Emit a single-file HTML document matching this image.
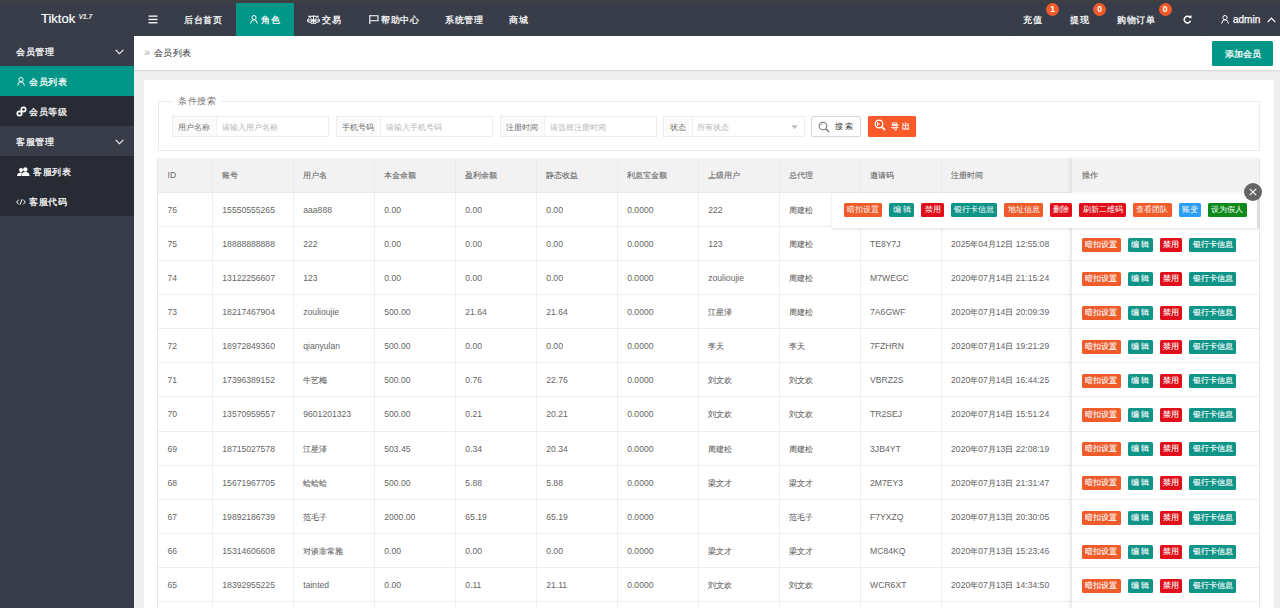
<!DOCTYPE html>
<html><head><meta charset="utf-8"><style>*{margin:0;padding:0;box-sizing:border-box}
html,body{width:1280px;height:608px;overflow:hidden;background:#efefef;font-family:"Liberation Sans",sans-serif;position:relative}
#topstrip{position:absolute;left:0;top:0;width:1280px;height:3px;background:#3e3f42}
#top{position:absolute;left:0;top:3px;width:1280px;height:33px;background:#393d49;color:#fff}
#logo{position:absolute;left:41px;top:8.4px;font-size:13px;color:#fff;line-height:16px}
#logo sup{font-size:6.5px;font-style:italic;position:relative;top:-2.5px;margin-left:3.5px;vertical-align:top}
.nav{position:absolute;top:0;height:33px;line-height:33px;font-size:10px;color:#fff;white-space:nowrap}
.nav.act{background:#009688}
#side{position:absolute;left:0;top:36px;width:134px;height:572px;background:#393d49}
.si{position:absolute;left:0;width:134px;height:30px;line-height:31.5px;font-size:9.9px;color:#fff;white-space:nowrap}
.si.sub{background:#282b33}
.si.act{background:#009688}
#crumb{position:absolute;left:134px;top:36px;width:1146px;height:33.5px;background:#fff;box-shadow:0 1px 1.5px rgba(0,0,0,.12)}
#card{position:absolute;left:144px;top:80px;width:1130px;height:540px;background:#fff}
#fs{position:absolute;left:158px;top:101px;width:1102px;height:50px;border:1px solid #ececec}
#legend{position:absolute;left:172px;top:95px;padding:0 6px;background:#fff;font-size:10px;line-height:12px;color:#777}
.ig{position:absolute;top:116px;height:21px;border:1px solid #ededed;background:#fff;font-size:8.7px;line-height:20.4px;white-space:nowrap}
.ig .lb{position:absolute;left:0;top:0;height:19px;background:#fbfbfb;border-right:1px solid #efefef;color:#707070;text-align:center}
.ig .ph{position:absolute;top:0;color:#b5b5b5}
#tbl{position:absolute;left:157px;top:158px;width:1102px;height:460px;border-left:1px solid #e6e6e6;font-size:8.6px;color:#666}
#tbl .th{position:absolute;top:0;height:34px;line-height:34.6px;padding-left:10.6px;white-space:nowrap}
#tbl::before{content:"";position:absolute;left:0;top:0;width:100%;height:34px;background:#f2f2f2}
#tbl .td{position:absolute;height:34px;line-height:36.4px;padding-left:10.6px;white-space:nowrap}
#tbl .vl{position:absolute;top:34px;width:1px;height:430px;background:#efefef}
#tbl .hl{position:absolute;left:0;width:100%;height:1px;background:#eee}
#fixed{position:absolute;left:912.6px;top:0;width:189px;height:460px;background:#fff;box-shadow:-2px 0 3px rgba(0,0,0,.06);border-left:1px solid #e8e8e8;border-right:1px solid #e6e6e6}
#fixed::before{content:"";position:absolute;left:0;top:0;width:100%;height:34px;background:#f2f2f2}
#fixed .hl2{position:absolute;left:0;width:100%;height:1px;background:#eee}
.ops{position:absolute;left:10.4px;height:34px;padding-top:11.8px;white-space:nowrap;font-size:0}
.b{display:inline-block;height:14px;line-height:14px;padding:0;text-align:center;font-size:8px;color:#fff;border-radius:1.5px;margin-right:7px;vertical-align:top}
.b .c{font-size:100%}
.w2{width:22.5px}.w4{width:38.6px}.w5{width:46.5px}.we{width:25.3px}
.b.o{background:#ef5b29}.b.t{background:#0f9488}.b.r{background:#e10f19}.b.bl{background:#2d9ef5}.b.g{background:#0d8a1a}
#pop{position:absolute;left:832px;top:193px;width:427px;height:34.5px;background:#fff;border-right:2px solid #dcdcdc;box-shadow:0 1px 3px rgba(0,0,0,.12);padding:10px 0 0 11.5px;white-space:nowrap;font-size:0;z-index:5}
#close{position:absolute;left:1243.5px;top:183px;width:18px;height:18px;border-radius:50%;background:#646464;z-index:6}
.ico{position:absolute;display:block}
.c{font-style:normal;font-size:93%}
.badge{position:absolute;top:0px;width:13px;height:13px;border-radius:50%;background:#f05a28;color:#fff;font-size:8.5px;font-weight:bold;line-height:13px;text-align:center}
#crumbtxt{position:absolute;left:144px;top:46.3px;font-size:10px;line-height:12px;color:#333;white-space:nowrap}
#addbtn{position:absolute;left:1212px;top:41px;width:61px;height:25px;background:#009688;color:#fff;font-size:10px;line-height:25px;text-align:center;border-radius:1.5px}
#sbtn{position:absolute;left:811px;top:116px;width:50px;height:21px;border:1px solid #d6d6d6;background:#fff;border-radius:1.5px;font-size:8.7px;line-height:19px;color:#333}
#ebtn{position:absolute;left:868px;top:115.5px;width:48px;height:21.5px;background:#f8592a;border-radius:1.5px;font-size:8.7px;line-height:21px;color:#fff}

.nav,.si,#addbtn,#ebtn span{-webkit-text-stroke:0.25px currentColor}
.nav .c,.si .c,#crumbtxt .c,#legend .c{letter-spacing:0.55px}

#tbl .vlh{position:absolute;top:0;width:1px;height:34px;background:#eaeaea}
#tbl .c{-webkit-text-stroke:0.1px currentColor}
#logo{-webkit-text-stroke:0.2px currentColor}
</style></head><body>
<div id="topstrip"></div>
<div id="top">
 <div id="logo">Tiktok<sup>V1.7</sup></div>
 <svg class="ico" style="left:148px;top:12px" width="10" height="9" viewBox="0 0 10 9"><rect x="0.5" y="0.5" width="9" height="1.3" fill="#fff"/><rect x="0.5" y="3.8" width="9" height="1.3" fill="#fff"/><rect x="0.5" y="7.1" width="9" height="1.3" fill="#fff"/></svg>
 <div class="nav" style="left:184px"><i class="c">后台首页</i></div>
 <div class="nav act" style="left:236px;width:58px;padding-left:25px"><i class="c">角色</i></div>
 <svg class="ico" style="left:250px;top:12px" width="8" height="9" viewBox="0 0 8 9"><circle cx="4" cy="2.6" r="2.1" fill="none" stroke="#fff" stroke-width="1"/><path d="M0.6 8.6 Q1 4.8 4 4.8 Q7 4.8 7.4 8.6" fill="none" stroke="#fff" stroke-width="1"/></svg>
 <svg class="ico" style="left:306.5px;top:11.7px" width="13" height="9.5" viewBox="0 0 13 9.5"><path d="M1.2 1.2 H11.8 M6.5 0.2 V8 M3.8 8.8 H9.2" stroke="#fff" stroke-width="1.1" fill="none"/><path d="M0.4 5 H5.4 A2.5 2.3 0 0 1 0.4 5Z M7.6 5 H12.6 A2.5 2.3 0 0 1 7.6 5Z" stroke="#fff" stroke-width="1.1" fill="none"/><path d="M2.9 1.2 L0.9 5 M2.9 1.2 L4.9 5 M10.1 1.2 L8.1 5 M10.1 1.2 L12.1 5" stroke="#fff" stroke-width="0.7"/></svg>
 <div class="nav" style="left:322px"><i class="c">交易</i></div>
 <svg class="ico" style="left:368.5px;top:11.7px" width="10" height="9.5" viewBox="0 0 10 9.5"><path d="M0.8 0 V9.5 M0.8 0.8 H9 V5.8 H0.8" stroke="#fff" stroke-width="1.1" fill="none"/></svg>
 <div class="nav" style="left:381px"><i class="c">帮助中心</i></div>
 <div class="nav" style="left:445px"><i class="c">系统管理</i></div>
 <div class="nav" style="left:509px"><i class="c">商城</i></div>
 <div style="position:absolute;left:1010px;top:0;width:1px;height:33px;background:#363945"></div><div style="position:absolute;left:1205px;top:0;width:1px;height:33px;background:#363945"></div>
 <div class="nav" style="left:1023px"><i class="c">充值</i></div>
 <div class="nav" style="left:1070px"><i class="c">提现</i></div>
 <div class="nav" style="left:1117px"><i class="c">购物订单</i></div>
 <div class="badge" style="left:1046px">1</div>
 <div class="badge" style="left:1093px">0</div>
 <div class="badge" style="left:1158.5px">0</div>
 <svg class="ico" style="left:1183px;top:12.3px" width="9" height="9" viewBox="0 0 9 9"><path d="M7.4 3 A3.3 3.3 0 1 0 7.6 5.8" stroke="#fff" stroke-width="1.5" fill="none"/><path d="M5.2 0.9 L8.6 0.4 L8.4 3.8 Z" fill="#fff"/></svg>
 <svg class="ico" style="left:1221px;top:12px" width="8" height="9" viewBox="0 0 8 9"><circle cx="4" cy="2.6" r="2.1" fill="none" stroke="#fff" stroke-width="1"/><path d="M0.6 8.6 Q1 4.8 4 4.8 Q7 4.8 7.4 8.6" fill="none" stroke="#fff" stroke-width="1"/></svg>
 <div class="nav" style="left:1233px">admin</div>
 <svg class="ico" style="left:1267px;top:14px" width="9" height="6" viewBox="0 0 9 6"><path d="M0.7 5.2 L4.5 1.2 L8.3 5.2" stroke="#fff" stroke-width="1.2" fill="none"/></svg>
</div>
<div id="side">
 <div class="si" style="top:0;padding-left:16px"><i class="c">会员管理</i></div>
 <svg class="ico" style="left:115px;top:13px" width="9" height="6" viewBox="0 0 9 6"><path d="M0.7 0.8 L4.5 4.8 L8.3 0.8" stroke="#fff" stroke-width="1.1" fill="none"/></svg>
 <div class="si act" style="top:30px;padding-left:29px"><i class="c">会员列表</i></div>
 <svg class="ico" style="left:17px;top:41px" width="8" height="9" viewBox="0 0 8 9"><circle cx="4" cy="2.6" r="2.1" fill="none" stroke="#fff" stroke-width="1"/><path d="M0.6 8.6 Q1 4.8 4 4.8 Q7 4.8 7.4 8.6" fill="none" stroke="#fff" stroke-width="1"/></svg>
 <div class="si sub" style="top:60px;padding-left:29px"><i class="c">会员等级</i></div>
 <svg class="ico" style="left:15.5px;top:70px" width="11" height="11" viewBox="0 0 11 11"><circle cx="3.5" cy="7.5" r="2.2" stroke="#fff" stroke-width="1.7" fill="none"/><circle cx="7.5" cy="3.5" r="2.2" stroke="#fff" stroke-width="1.7" fill="none"/><path d="M4.6 6.4 L6.4 4.6" stroke="#fff" stroke-width="2"/></svg>
 <div class="si" style="top:90px;padding-left:16px"><i class="c">客服管理</i></div>
 <svg class="ico" style="left:115px;top:103px" width="9" height="6" viewBox="0 0 9 6"><path d="M0.7 0.8 L4.5 4.8 L8.3 0.8" stroke="#fff" stroke-width="1.1" fill="none"/></svg>
 <div class="si sub" style="top:120px;padding-left:33px"><i class="c">客服列表</i></div>
 <svg class="ico" style="left:17px;top:131px" width="13" height="9" viewBox="0 0 13 9"><circle cx="8.3" cy="2.5" r="2.2" fill="#fff"/><path d="M4.5 9 Q4.5 5 8.3 5 Q12.5 5 12.5 9Z" fill="#fff"/><circle cx="4" cy="3" r="2" fill="#fff"/><path d="M0 9 Q0 5.5 4 5.5 Q5 5.5 5.5 6 Q4 7 4 9Z" fill="#fff"/></svg>
 <div class="si sub" style="top:150px;padding-left:29px"><i class="c">客服代码</i></div>
 <svg class="ico" style="left:16px;top:163px" width="10" height="6" viewBox="0 0 10 6"><path d="M2.8 0.6 L0.7 3 L2.8 5.4 M7.2 0.6 L9.3 3 L7.2 5.4 M5.9 0.3 L4.1 5.7" stroke="#fff" stroke-width="1" fill="none"/></svg>
</div>
<div id="crumb"></div>
<div id="crumbtxt"><span style="color:#aaa;font-size:11px">»</span><span style="margin-left:3.5px"><i class="c">会员列表</i></span></div>
<div id="addbtn"><i class="c">添加会员</i></div>
<div id="card"></div>
<div id="fs"></div>
<div id="legend"><i class="c">条件搜索</i></div>
<div class="ig" style="left:171.5px;width:157px"><div class="lb" style="width:44px"><i class="c">用户名称</i></div><div class="ph" style="left:49px"><i class="c">请输入用户名称</i></div></div>
<div class="ig" style="left:335.5px;width:157px"><div class="lb" style="width:44px"><i class="c">手机号码</i></div><div class="ph" style="left:49px"><i class="c">请输入手机号码</i></div></div>
<div class="ig" style="left:499.5px;width:157px"><div class="lb" style="width:44px"><i class="c">注册时间</i></div><div class="ph" style="left:49px"><i class="c">请选择注册时间</i></div></div>
<div class="ig" style="left:663px;width:141.5px"><div class="lb" style="width:29px"><i class="c">状态</i></div><div class="ph" style="left:33px"><i class="c">所有状态</i></div></div>
<svg class="ico" style="left:790.5px;top:124.5px" width="7" height="4.5" viewBox="0 0 7 4.5"><path d="M0.3 0.3 H6.7 L3.5 4.2Z" fill="#bbb"/></svg>
<div id="sbtn"><svg style="position:absolute;left:6px;top:4px" width="12" height="12" viewBox="0 0 12 12"><circle cx="5" cy="5" r="3.8" stroke="#777" stroke-width="1.1" fill="none"/><path d="M7.8 7.8 L11 11" stroke="#777" stroke-width="1.6"/><path d="M3 4.2 A2 2 0 0 1 4.4 2.6" stroke="#777" stroke-width="0.8" fill="none"/></svg><span style="position:absolute;left:23px"><i class="c">搜</i>&nbsp;<i class="c">索</i></span></div>
<div id="ebtn"><svg style="position:absolute;left:6px;top:3.5px" width="12" height="12" viewBox="0 0 12 12"><circle cx="5" cy="5" r="3.8" stroke="#fff" stroke-width="1.3" fill="none"/><path d="M7.8 7.8 L11 11" stroke="#fff" stroke-width="1.8"/><path d="M3.5 3 V7 M3.5 5 H6" stroke="#fff" stroke-width="0.9" fill="none"/></svg><span style="position:absolute;left:23px;letter-spacing:2.5px"><i class="c">导出</i></span></div>
<div id="pop"><span class="b o w4"><i class="c">暗扣设置</i></span><span class="b t we"><i class="c">编</i>&nbsp;<i class="c">辑</i></span><span class="b r w2"><i class="c">禁用</i></span><span class="b t w5"><i class="c">银行卡信息</i></span><span class="b o w4"><i class="c">地址信息</i></span><span class="b r w2"><i class="c">删除</i></span><span class="b r w5"><i class="c">刷新二维码</i></span><span class="b o w4"><i class="c">查看团队</i></span><span class="b bl w2"><i class="c">账变</i></span><span class="b g w4"><i class="c">设为假人</i></span></div>
<div id="close"><svg width="18" height="18" viewBox="0 0 18 18"><path d="M5.8 5.8 L12.2 12.2 M12.2 5.8 L5.8 12.2" stroke="#fff" stroke-width="1.1"/></svg></div>

<div id="tbl"><div class="th" style="left:-1.00px">ID</div><div class="th" style="left:53.75px"><i class="c">账号</i></div><div class="th" style="left:134.70px"><i class="c">用户名</i></div><div class="th" style="left:215.70px"><i class="c">本金余额</i></div><div class="th" style="left:296.70px"><i class="c">盈利余额</i></div><div class="th" style="left:377.60px"><i class="c">静态收益</i></div><div class="th" style="left:458.60px"><i class="c">利息宝金额</i></div><div class="th" style="left:539.60px"><i class="c">上级用户</i></div><div class="th" style="left:620.50px"><i class="c">总代理</i></div><div class="th" style="left:701.50px"><i class="c">邀请码</i></div><div class="th" style="left:782.50px"><i class="c">注册时间</i></div><div class="hl" style="top:34px;background:#eaeaea"></div><div class="vl" style="left:53.75px"></div><div class="vlh" style="left:53.75px"></div><div class="vl" style="left:134.70px"></div><div class="vlh" style="left:134.70px"></div><div class="vl" style="left:215.70px"></div><div class="vlh" style="left:215.70px"></div><div class="vl" style="left:296.70px"></div><div class="vlh" style="left:296.70px"></div><div class="vl" style="left:377.60px"></div><div class="vlh" style="left:377.60px"></div><div class="vl" style="left:458.60px"></div><div class="vlh" style="left:458.60px"></div><div class="vl" style="left:539.60px"></div><div class="vlh" style="left:539.60px"></div><div class="vl" style="left:620.50px"></div><div class="vlh" style="left:620.50px"></div><div class="vl" style="left:701.50px"></div><div class="vlh" style="left:701.50px"></div><div class="vl" style="left:782.50px"></div><div class="vlh" style="left:782.50px"></div><div class="hl" style="top:68.08px"></div><div class="td" style="left:-1.00px;top:34.00px">76</div><div class="td" style="left:53.75px;top:34.00px">15550555265</div><div class="td" style="left:134.70px;top:34.00px">aaa888</div><div class="td" style="left:215.70px;top:34.00px">0.00</div><div class="td" style="left:296.70px;top:34.00px">0.00</div><div class="td" style="left:377.60px;top:34.00px">0.00</div><div class="td" style="left:458.60px;top:34.00px">0.0000</div><div class="td" style="left:539.60px;top:34.00px">222</div><div class="td" style="left:620.50px;top:34.00px"><i class="c">周建松</i></div><div class="hl" style="top:102.16px"></div><div class="td" style="left:-1.00px;top:68.08px">75</div><div class="td" style="left:53.75px;top:68.08px">18888888888</div><div class="td" style="left:134.70px;top:68.08px">222</div><div class="td" style="left:215.70px;top:68.08px">0.00</div><div class="td" style="left:296.70px;top:68.08px">0.00</div><div class="td" style="left:377.60px;top:68.08px">0.00</div><div class="td" style="left:458.60px;top:68.08px">0.0000</div><div class="td" style="left:539.60px;top:68.08px">123</div><div class="td" style="left:620.50px;top:68.08px"><i class="c">周建松</i></div><div class="td" style="left:701.50px;top:68.08px">TE8Y7J</div><div class="td" style="left:782.50px;top:68.08px">2025<i class="c">年</i>04<i class="c">月</i>12<i class="c">日</i> 12:55:08</div><div class="hl" style="top:136.24px"></div><div class="td" style="left:-1.00px;top:102.16px">74</div><div class="td" style="left:53.75px;top:102.16px">13122256607</div><div class="td" style="left:134.70px;top:102.16px">123</div><div class="td" style="left:215.70px;top:102.16px">0.00</div><div class="td" style="left:296.70px;top:102.16px">0.00</div><div class="td" style="left:377.60px;top:102.16px">0.00</div><div class="td" style="left:458.60px;top:102.16px">0.0000</div><div class="td" style="left:539.60px;top:102.16px">zoulioujie</div><div class="td" style="left:620.50px;top:102.16px"><i class="c">周建松</i></div><div class="td" style="left:701.50px;top:102.16px">M7WEGC</div><div class="td" style="left:782.50px;top:102.16px">2020<i class="c">年</i>07<i class="c">月</i>14<i class="c">日</i> 21:15:24</div><div class="hl" style="top:170.32px"></div><div class="td" style="left:-1.00px;top:136.24px">73</div><div class="td" style="left:53.75px;top:136.24px">18217467904</div><div class="td" style="left:134.70px;top:136.24px">zoulioujie</div><div class="td" style="left:215.70px;top:136.24px">500.00</div><div class="td" style="left:296.70px;top:136.24px">21.64</div><div class="td" style="left:377.60px;top:136.24px">21.64</div><div class="td" style="left:458.60px;top:136.24px">0.0000</div><div class="td" style="left:539.60px;top:136.24px"><i class="c">江星泽</i></div><div class="td" style="left:620.50px;top:136.24px"><i class="c">周建松</i></div><div class="td" style="left:701.50px;top:136.24px">7A6GWF</div><div class="td" style="left:782.50px;top:136.24px">2020<i class="c">年</i>07<i class="c">月</i>14<i class="c">日</i> 20:09:39</div><div class="hl" style="top:204.40px"></div><div class="td" style="left:-1.00px;top:170.32px">72</div><div class="td" style="left:53.75px;top:170.32px">18972849360</div><div class="td" style="left:134.70px;top:170.32px">qianyulan</div><div class="td" style="left:215.70px;top:170.32px">500.00</div><div class="td" style="left:296.70px;top:170.32px">0.00</div><div class="td" style="left:377.60px;top:170.32px">0.00</div><div class="td" style="left:458.60px;top:170.32px">0.0000</div><div class="td" style="left:539.60px;top:170.32px"><i class="c">李天</i></div><div class="td" style="left:620.50px;top:170.32px"><i class="c">李天</i></div><div class="td" style="left:701.50px;top:170.32px">7FZHRN</div><div class="td" style="left:782.50px;top:170.32px">2020<i class="c">年</i>07<i class="c">月</i>14<i class="c">日</i> 19:21:29</div><div class="hl" style="top:238.48px"></div><div class="td" style="left:-1.00px;top:204.40px">71</div><div class="td" style="left:53.75px;top:204.40px">17396389152</div><div class="td" style="left:134.70px;top:204.40px"><i class="c">牛艺梅</i></div><div class="td" style="left:215.70px;top:204.40px">500.00</div><div class="td" style="left:296.70px;top:204.40px">0.76</div><div class="td" style="left:377.60px;top:204.40px">22.76</div><div class="td" style="left:458.60px;top:204.40px">0.0000</div><div class="td" style="left:539.60px;top:204.40px"><i class="c">刘文欢</i></div><div class="td" style="left:620.50px;top:204.40px"><i class="c">刘文欢</i></div><div class="td" style="left:701.50px;top:204.40px">VBRZ2S</div><div class="td" style="left:782.50px;top:204.40px">2020<i class="c">年</i>07<i class="c">月</i>14<i class="c">日</i> 16:44:25</div><div class="hl" style="top:272.56px"></div><div class="td" style="left:-1.00px;top:238.48px">70</div><div class="td" style="left:53.75px;top:238.48px">13570959557</div><div class="td" style="left:134.70px;top:238.48px">9601201323</div><div class="td" style="left:215.70px;top:238.48px">500.00</div><div class="td" style="left:296.70px;top:238.48px">0.21</div><div class="td" style="left:377.60px;top:238.48px">20.21</div><div class="td" style="left:458.60px;top:238.48px">0.0000</div><div class="td" style="left:539.60px;top:238.48px"><i class="c">刘文欢</i></div><div class="td" style="left:620.50px;top:238.48px"><i class="c">刘文欢</i></div><div class="td" style="left:701.50px;top:238.48px">TR2SEJ</div><div class="td" style="left:782.50px;top:238.48px">2020<i class="c">年</i>07<i class="c">月</i>14<i class="c">日</i> 15:51:24</div><div class="hl" style="top:306.64px"></div><div class="td" style="left:-1.00px;top:272.56px">69</div><div class="td" style="left:53.75px;top:272.56px">18715027578</div><div class="td" style="left:134.70px;top:272.56px"><i class="c">江星泽</i></div><div class="td" style="left:215.70px;top:272.56px">503.45</div><div class="td" style="left:296.70px;top:272.56px">0.34</div><div class="td" style="left:377.60px;top:272.56px">20.34</div><div class="td" style="left:458.60px;top:272.56px">0.0000</div><div class="td" style="left:539.60px;top:272.56px"><i class="c">周建松</i></div><div class="td" style="left:620.50px;top:272.56px"><i class="c">周建松</i></div><div class="td" style="left:701.50px;top:272.56px">3JB4YT</div><div class="td" style="left:782.50px;top:272.56px">2020<i class="c">年</i>07<i class="c">月</i>13<i class="c">日</i> 22:08:19</div><div class="hl" style="top:340.72px"></div><div class="td" style="left:-1.00px;top:306.64px">68</div><div class="td" style="left:53.75px;top:306.64px">15671967705</div><div class="td" style="left:134.70px;top:306.64px"><i class="c">蛤蛤蛤</i></div><div class="td" style="left:215.70px;top:306.64px">500.00</div><div class="td" style="left:296.70px;top:306.64px">5.88</div><div class="td" style="left:377.60px;top:306.64px">5.88</div><div class="td" style="left:458.60px;top:306.64px">0.0000</div><div class="td" style="left:539.60px;top:306.64px"><i class="c">梁文才</i></div><div class="td" style="left:620.50px;top:306.64px"><i class="c">梁文才</i></div><div class="td" style="left:701.50px;top:306.64px">2M7EY3</div><div class="td" style="left:782.50px;top:306.64px">2020<i class="c">年</i>07<i class="c">月</i>13<i class="c">日</i> 21:31:47</div><div class="hl" style="top:374.80px"></div><div class="td" style="left:-1.00px;top:340.72px">67</div><div class="td" style="left:53.75px;top:340.72px">19892186739</div><div class="td" style="left:134.70px;top:340.72px"><i class="c">范毛子</i></div><div class="td" style="left:215.70px;top:340.72px">2000.00</div><div class="td" style="left:296.70px;top:340.72px">65.19</div><div class="td" style="left:377.60px;top:340.72px">65.19</div><div class="td" style="left:458.60px;top:340.72px">0.0000</div><div class="td" style="left:620.50px;top:340.72px"><i class="c">范毛子</i></div><div class="td" style="left:701.50px;top:340.72px">F7YXZQ</div><div class="td" style="left:782.50px;top:340.72px">2020<i class="c">年</i>07<i class="c">月</i>13<i class="c">日</i> 20:30:05</div><div class="hl" style="top:408.88px"></div><div class="td" style="left:-1.00px;top:374.80px">66</div><div class="td" style="left:53.75px;top:374.80px">15314606608</div><div class="td" style="left:134.70px;top:374.80px"><i class="c">对谈非常雅</i></div><div class="td" style="left:215.70px;top:374.80px">0.00</div><div class="td" style="left:296.70px;top:374.80px">0.00</div><div class="td" style="left:377.60px;top:374.80px">0.00</div><div class="td" style="left:458.60px;top:374.80px">0.0000</div><div class="td" style="left:539.60px;top:374.80px"><i class="c">梁文才</i></div><div class="td" style="left:620.50px;top:374.80px"><i class="c">梁文才</i></div><div class="td" style="left:701.50px;top:374.80px">MC84KQ</div><div class="td" style="left:782.50px;top:374.80px">2020<i class="c">年</i>07<i class="c">月</i>13<i class="c">日</i> 15:23:46</div><div class="hl" style="top:442.96px"></div><div class="td" style="left:-1.00px;top:408.88px">65</div><div class="td" style="left:53.75px;top:408.88px">18392955225</div><div class="td" style="left:134.70px;top:408.88px">tainted</div><div class="td" style="left:215.70px;top:408.88px">0.00</div><div class="td" style="left:296.70px;top:408.88px">0.11</div><div class="td" style="left:377.60px;top:408.88px">21.11</div><div class="td" style="left:458.60px;top:408.88px">0.0000</div><div class="td" style="left:539.60px;top:408.88px"><i class="c">刘文欢</i></div><div class="td" style="left:620.50px;top:408.88px"><i class="c">刘文欢</i></div><div class="td" style="left:701.50px;top:408.88px">WCR6XT</div><div class="td" style="left:782.50px;top:408.88px">2020<i class="c">年</i>07<i class="c">月</i>13<i class="c">日</i> 14:34:50</div><div class="hl" style="top:477.04px"></div><div class="td" style="left:-1.00px;top:442.96px">64</div><div id="fixed"><div class="th" style="left:0px"><i class="c">操作</i></div><div class="hl2" style="top:68.08px"></div><div class="hl2" style="top:102.16px"></div><div class="ops" style="top:68.08px"><span class="b o w4"><i class="c">暗扣设置</i></span><span class="b t we"><i class="c">编</i>&nbsp;<i class="c">辑</i></span><span class="b r w2"><i class="c">禁用</i></span><span class="b t w5"><i class="c">银行卡信息</i></span></div><div class="hl2" style="top:136.24px"></div><div class="ops" style="top:102.16px"><span class="b o w4"><i class="c">暗扣设置</i></span><span class="b t we"><i class="c">编</i>&nbsp;<i class="c">辑</i></span><span class="b r w2"><i class="c">禁用</i></span><span class="b t w5"><i class="c">银行卡信息</i></span></div><div class="hl2" style="top:170.32px"></div><div class="ops" style="top:136.24px"><span class="b o w4"><i class="c">暗扣设置</i></span><span class="b t we"><i class="c">编</i>&nbsp;<i class="c">辑</i></span><span class="b r w2"><i class="c">禁用</i></span><span class="b t w5"><i class="c">银行卡信息</i></span></div><div class="hl2" style="top:204.40px"></div><div class="ops" style="top:170.32px"><span class="b o w4"><i class="c">暗扣设置</i></span><span class="b t we"><i class="c">编</i>&nbsp;<i class="c">辑</i></span><span class="b r w2"><i class="c">禁用</i></span><span class="b t w5"><i class="c">银行卡信息</i></span></div><div class="hl2" style="top:238.48px"></div><div class="ops" style="top:204.40px"><span class="b o w4"><i class="c">暗扣设置</i></span><span class="b t we"><i class="c">编</i>&nbsp;<i class="c">辑</i></span><span class="b r w2"><i class="c">禁用</i></span><span class="b t w5"><i class="c">银行卡信息</i></span></div><div class="hl2" style="top:272.56px"></div><div class="ops" style="top:238.48px"><span class="b o w4"><i class="c">暗扣设置</i></span><span class="b t we"><i class="c">编</i>&nbsp;<i class="c">辑</i></span><span class="b r w2"><i class="c">禁用</i></span><span class="b t w5"><i class="c">银行卡信息</i></span></div><div class="hl2" style="top:306.64px"></div><div class="ops" style="top:272.56px"><span class="b o w4"><i class="c">暗扣设置</i></span><span class="b t we"><i class="c">编</i>&nbsp;<i class="c">辑</i></span><span class="b r w2"><i class="c">禁用</i></span><span class="b t w5"><i class="c">银行卡信息</i></span></div><div class="hl2" style="top:340.72px"></div><div class="ops" style="top:306.64px"><span class="b o w4"><i class="c">暗扣设置</i></span><span class="b t we"><i class="c">编</i>&nbsp;<i class="c">辑</i></span><span class="b r w2"><i class="c">禁用</i></span><span class="b t w5"><i class="c">银行卡信息</i></span></div><div class="hl2" style="top:374.80px"></div><div class="ops" style="top:340.72px"><span class="b o w4"><i class="c">暗扣设置</i></span><span class="b t we"><i class="c">编</i>&nbsp;<i class="c">辑</i></span><span class="b r w2"><i class="c">禁用</i></span><span class="b t w5"><i class="c">银行卡信息</i></span></div><div class="hl2" style="top:408.88px"></div><div class="ops" style="top:374.80px"><span class="b o w4"><i class="c">暗扣设置</i></span><span class="b t we"><i class="c">编</i>&nbsp;<i class="c">辑</i></span><span class="b r w2"><i class="c">禁用</i></span><span class="b t w5"><i class="c">银行卡信息</i></span></div><div class="hl2" style="top:442.96px"></div><div class="ops" style="top:408.88px"><span class="b o w4"><i class="c">暗扣设置</i></span><span class="b t we"><i class="c">编</i>&nbsp;<i class="c">辑</i></span><span class="b r w2"><i class="c">禁用</i></span><span class="b t w5"><i class="c">银行卡信息</i></span></div><div class="hl2" style="top:477.04px"></div></div></div>
</body></html>
